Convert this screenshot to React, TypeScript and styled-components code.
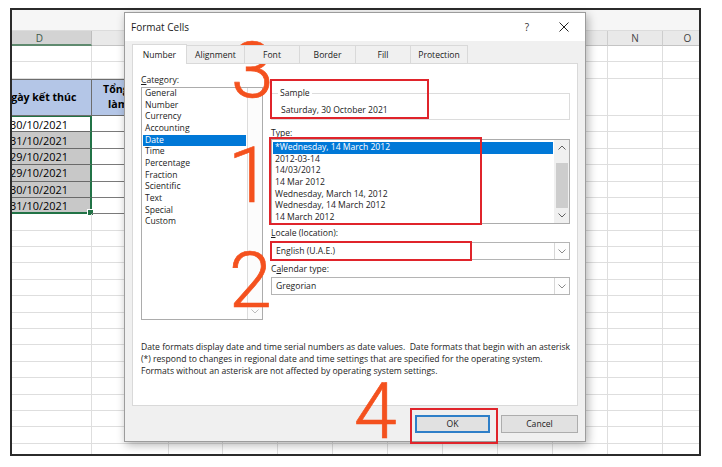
import React from "react";
import styled, { createGlobalStyle, css } from "styled-components";

const GlobalStyle = createGlobalStyle`
  html, body { margin: 0; padding: 0; background: #fff; }
  body { width: 722px; height: 467px; overflow: hidden; }
  #root { width: 722px; height: 467px; }
`;

const UI_FONT = 8.6;

const Page = styled.div`
  position: relative;
  width: 722px;
  height: 467px;
  box-sizing: border-box;
  padding: 8px 0 0 10px;
  background: #fff;
`;

const Frame = styled.div`
  width: 691px;
  height: 448px;
  box-sizing: border-box;
  border: 2px solid #2b2b2b;
  overflow: hidden;
  display: flex;
  flex-direction: column;
  background: #fff;
`;

const TopStrip = styled.div`
  height: 21px;
  flex: none;
  background: #f6f6f6;
  border-bottom: 1px solid #dcdcdc;
  box-sizing: border-box;
`;

const Sheet = styled.div`
  display: grid;
  grid-template-columns: 104px 77px 54px repeat(8, 55px) 50px;
  grid-template-rows: 15px 16.4px 16.4px 37.2px repeat(22, 16.4px);
  margin-left: -24px;
  font-family: "Open Sans", "Noto Sans", sans-serif;
  color: #000;
`;

type CellKind =
  | "colhead"
  | "colheadSel"
  | "blank"
  | "head"
  | "dataFirst"
  | "data"
  | "dataLast"
  | "dataE";

const Cell = styled.div<{ $kind: CellKind; $grey?: boolean }>`
  position: relative;
  box-sizing: border-box;
  display: flex;
  align-items: center;
  justify-content: center;
  text-align: center;
  white-space: nowrap;
  overflow: visible;
  font-size: 10.9px;
  border-right: 1px solid #dedede;
  border-bottom: 1px solid #dedede;
  ${(p) =>
    p.$kind === "colhead" &&
    css`
      background: #e9e9e9;
      color: #444;
      font-size: 10px;
      border-right: 1px solid #cdcdcd;
      border-bottom: 1px solid #c4c4c4;
    `}
  ${(p) =>
    p.$kind === "colheadSel" &&
    css`
      background: #d3d3d3;
      color: #3c5a48;
      font-size: 10px;
      border-right: 1px solid #bdbdbd;
      border-bottom: 2px solid #5f8a6f;
    `}
  ${(p) =>
    p.$kind === "head" &&
    css`
      background: #b4c6e7;
      font-weight: 700;
      font-size: 10.6px;
      white-space: normal;
      line-height: 15px;
      border-right: 1px solid #6d6d6d;
      border-bottom: 1px solid #6d6d6d;
      border-top: 1px solid #6d6d6d;
    `}
  ${(p) =>
    (p.$kind === "dataFirst" || p.$kind === "data" || p.$kind === "dataLast") &&
    css`
      background: ${p.$grey ? "#c8c8c8" : "#fff"};
      border-right: 2px solid #217346;
      border-bottom: 1px solid #6a6a6a;
    `}
  ${(p) =>
    p.$kind === "dataFirst" &&
    css`
      border-top: 1px solid #217346;
    `}
  ${(p) =>
    p.$kind === "dataLast" &&
    css`
      border-bottom: 2px solid #217346;
      &::after {
        content: "";
        position: absolute;
        right: -4px;
        bottom: -4px;
        width: 5px;
        height: 5px;
        background: #217346;
        border: 1px solid #fff;
      }
    `}
  ${(p) =>
    p.$kind === "dataE" &&
    css`
      border-right: 1px solid #7a7a7a;
      border-bottom: 1px solid #7a7a7a;
    `}
`;

const HeadText = styled.span`
  display: block;
  width: 100%;
  padding: 0 2px;
  box-sizing: border-box;
`;

/* ---------- dialog ---------- */

const Dialog = styled.div`
  position: absolute;
  left: 124px;
  top: 12px;
  width: 462px;
  height: 430px;
  box-sizing: border-box;
  background: #f0f0f0;
  border: 1px solid #9c9c9c;
  box-shadow: 2px 3px 9px rgba(0, 0, 0, 0.3);
  display: flex;
  flex-direction: column;
  font-family: "Open Sans", "Noto Sans", sans-serif;
  color: #1b1b1b;
`;

const TitleBar = styled.div`
  height: 28px;
  flex: none;
  background: #fff;
  display: flex;
  align-items: center;
  padding-left: 6px;
`;

const Title = styled.div`
  font-size: 10px;
  flex: 1;
  color: #1b1b1b;
`;

const TitleButton = styled.div<{ $w: number }>`
  width: ${(p) => p.$w}px;
  height: 28px;
  display: flex;
  align-items: center;
  justify-content: center;
  font-size: 10px;
  color: #333;
`;

const Body = styled.div`
  flex: 1;
  display: flex;
  flex-direction: column;
  padding: 3px 7px 0 7px;
`;

const TabStrip = styled.div`
  display: flex;
  height: 20px;
  position: relative;
  z-index: 1;
`;

const Tab = styled.div<{ $w: number; $active?: boolean }>`
  width: ${(p) => p.$w}px;
  height: ${(p) => (p.$active ? 20 : 19)}px;
  margin-top: ${(p) => (p.$active ? 0 : 1)}px;
  box-sizing: border-box;
  border: 1px solid #d9d9d9;
  border-left: ${(p) => (p.$active ? "1px solid #d9d9d9" : "none")};
  border-bottom: ${(p) => (p.$active ? "none" : "1px solid #d9d9d9")};
  background: ${(p) => (p.$active ? "#fff" : "#f0f0f0")};
  display: flex;
  align-items: center;
  justify-content: center;
  font-size: ${UI_FONT}px;
  color: #1b1b1b;
  &:first-child {
    border-left: 1px solid #d9d9d9;
  }
`;

const Panel = styled.div`
  margin-top: -1px;
  height: 343px;
  box-sizing: border-box;
  background: #fff;
  border: 1px solid #d9d9d9;
  padding: 10px 8px 0 8px;
  display: flex;
  flex-direction: column;
`;

const PanelTop = styled.div`
  display: grid;
  grid-template-columns: 122px 299px;
  column-gap: 8px;
`;

const Column = styled.div`
  display: flex;
  flex-direction: column;
`;

const Label = styled.div<{ $mt?: number }>`
  font-size: ${UI_FONT}px;
  line-height: 12px;
  height: 12px;
  margin-top: ${(p) => p.$mt ?? 0}px;
  white-space: nowrap;
  color: #1b1b1b;
  u {
    text-decoration: underline;
    text-underline-offset: 1px;
  }
`;

const ListBox = styled.div<{ $h: number; $mt?: number }>`
  height: ${(p) => p.$h}px;
  margin-top: ${(p) => p.$mt ?? 0}px;
  box-sizing: border-box;
  border: 1px solid #acacac;
  background: #fff;
  display: flex;
`;

const ListItems = styled.div<{ $pt: number }>`
  flex: 1;
  min-width: 0;
  padding: ${(p) => p.$pt}px 1px 0 1px;
`;

const ListItem = styled.div<{ $sel?: boolean }>`
  height: 11.67px;
  line-height: 11.67px;
  font-size: ${UI_FONT}px;
  padding-left: 2px;
  white-space: nowrap;
  background: ${(p) => (p.$sel ? "#0078d7" : "transparent")};
  color: ${(p) => (p.$sel ? "#fff" : "#1b1b1b")};
`;

const ScrollBar = styled.div<{ $disabled?: boolean }>`
  width: 14px;
  flex: none;
  display: flex;
  flex-direction: column;
  background: ${(p) => (p.$disabled ? "#fcfcfc" : "#f0f0f0")};
  border-left: 1px solid ${(p) => (p.$disabled ? "#dcdcdc" : "#f0f0f0")};
`;

const ScrollArrow = styled.div`
  height: 15px;
  flex: none;
  display: flex;
  align-items: center;
  justify-content: center;
`;

const ScrollTrack = styled.div`
  flex: 1;
  display: flex;
  flex-direction: column;
  padding: 8px 1px 0 1px;
`;

const ScrollThumb = styled.div`
  height: 45px;
  background: #cdcdcd;
`;

const SampleGroup = styled.fieldset`
  margin: 13px 0 0 0;
  height: 33px;
  box-sizing: border-box;
  border: 1px solid #dcdcdc;
  padding: 0 0 0 9px;
  min-width: 0;
`;

const Legend = styled.legend`
  font-size: ${UI_FONT}px;
  line-height: 12px;
  padding: 0 2px;
  margin-left: -3px;
  color: #1b1b1b;
`;

const SampleValue = styled.div`
  font-size: ${UI_FONT}px;
  line-height: 12px;
  margin-top: 5px;
  color: #1b1b1b;
`;

const Combo = styled.div<{ $mt?: number }>`
  height: 18px;
  margin-top: ${(p) => p.$mt ?? 0}px;
  box-sizing: border-box;
  border: 1px solid #b4b4b4;
  background: #fff;
  display: flex;
`;

const ComboText = styled.div`
  flex: 1;
  font-size: ${UI_FONT}px;
  line-height: 16px;
  padding-left: 4px;
  color: #1b1b1b;
`;

const ComboButton = styled.div`
  width: 14px;
  flex: none;
  border-left: 1px solid #d6d6d6;
  display: flex;
  align-items: center;
  justify-content: center;
  background: #fdfdfd;
`;

const Description = styled.div`
  margin-top: 21px;
  font-size: ${UI_FONT}px;
  line-height: 12px;
  white-space: pre;
  color: #1b1b1b;
`;

const ButtonRow = styled.div`
  display: flex;
  justify-content: flex-end;
  gap: 11px;
  margin-top: 9px;
`;

const Button = styled.div<{ $w: number; $default?: boolean }>`
  width: ${(p) => p.$w}px;
  height: 18px;
  box-sizing: border-box;
  background: #e1e1e1;
  border: ${(p) => (p.$default ? "2px solid #2f7fc8" : "1px solid #adadad")};
  display: flex;
  align-items: center;
  justify-content: center;
  font-size: ${UI_FONT}px;
  color: #1b1b1b;
`;

/* ---------- annotations ---------- */

const RedBox = styled.div<{ $x: number; $y: number; $w: number; $h: number }>`
  position: absolute;
  left: ${(p) => p.$x}px;
  top: ${(p) => p.$y}px;
  width: ${(p) => p.$w}px;
  height: ${(p) => p.$h}px;
  box-sizing: border-box;
  border: 2px solid #e0242b;
  pointer-events: none;
`;

const Marker = styled.span<{ $x: number; $y: number }>`
  position: absolute;
  left: ${(p) => p.$x}px;
  top: ${(p) => p.$y}px;
  font-family: Roboto, "Open Sans", sans-serif;
  font-weight: 300;
  font-size: 77px;
  line-height: 1;
  color: #f4511e;
  -webkit-text-stroke: 0.7px #f4511e;
`;

/* ---------- icons ---------- */

const ChevronUp = ({ color = "#606060" }: { color?: string }) => (
  <svg width="8" height="5" viewBox="0 0 8 5">
    <path d="M0.5 4.5 L4 1 L7.5 4.5" fill="none" stroke={color} strokeWidth="1" />
  </svg>
);

const ChevronDown = ({ color = "#606060" }: { color?: string }) => (
  <svg width="8" height="5" viewBox="0 0 8 5">
    <path d="M0.5 0.5 L4 4 L7.5 0.5" fill="none" stroke={color} strokeWidth="1" />
  </svg>
);

const CloseIcon = () => (
  <svg width="10" height="10" viewBox="0 0 10 10">
    <path d="M0.5 0.5 L9.5 9.5 M9.5 0.5 L0.5 9.5" fill="none" stroke="#222" strokeWidth="1" />
  </svg>
);

/* ---------- data ---------- */

const COLS = ["D", "E", "F", "G", "H", "I", "J", "K", "L", "M", "N", "O"];
const DATES = ["30/10/2021", "31/10/2021", "29/10/2021", "29/10/2021", "30/10/2021", "31/10/2021"];
const TOTAL_ROWS = 26;

const CATEGORIES = [
  "General",
  "Number",
  "Currency",
  "Accounting",
  "Date",
  "Time",
  "Percentage",
  "Fraction",
  "Scientific",
  "Text",
  "Special",
  "Custom",
];

const TYPES = [
  "*Wednesday, 14 March 2012",
  "2012-03-14",
  "14/03/2012",
  "14 Mar 2012",
  "Wednesday, March 14, 2012",
  "Wednesday, 14 March 2012",
  "14 March 2012",
];

const TABS: { label: string; w: number }[] = [
  { label: "Number", w: 55 },
  { label: "Alignment", w: 58 },
  { label: "Font", w: 55 },
  { label: "Border", w: 56 },
  { label: "Fill", w: 55 },
  { label: "Protection", w: 57 },
];

function renderSheet() {
  const cells: React.ReactNode[] = [];
  for (let r = 0; r < TOTAL_ROWS; r++) {
    COLS.forEach((col, c) => {
      const key = `${r}-${c}`;
      if (r === 0) {
        cells.push(
          <Cell key={key} $kind={c === 0 ? "colheadSel" : "colhead"}>
            {col}
          </Cell>
        );
      } else if (r === 3 && c === 0) {
        cells.push(
          <Cell key={key} $kind="head">
            <HeadText>Ngày kết thúc</HeadText>
          </Cell>
        );
      } else if (r === 3 && c === 1) {
        cells.push(
          <Cell key={key} $kind="head">
            <HeadText>Tổng ngày làm việc</HeadText>
          </Cell>
        );
      } else if (r >= 4 && r <= 9 && c === 0) {
        const i = r - 4;
        const kind: CellKind = i === 0 ? "dataFirst" : i === 5 ? "dataLast" : "data";
        cells.push(
          <Cell key={key} $kind={kind} $grey={i > 0}>
            {DATES[i]}
          </Cell>
        );
      } else if (r >= 4 && r <= 9 && c === 1) {
        cells.push(<Cell key={key} $kind="dataE" />);
      } else {
        cells.push(<Cell key={key} $kind="blank" />);
      }
    });
  }
  return cells;
}

export default function App() {
  return (
    <>
      <GlobalStyle />
      <Page>
        <Frame>
          <TopStrip />
          <Sheet>{renderSheet()}</Sheet>
        </Frame>

        <Dialog>
          <TitleBar>
            <Title>Format Cells</Title>
            <TitleButton $w={30}>?</TitleButton>
            <TitleButton $w={43}>
              <CloseIcon />
            </TitleButton>
          </TitleBar>
          <Body>
            <TabStrip>
              {TABS.map((t, i) => (
                <Tab key={t.label} $w={t.w} $active={i === 0}>
                  {t.label}
                </Tab>
              ))}
            </TabStrip>
            <Panel>
              <PanelTop>
                <Column>
                  <Label>
                    <u>C</u>ategory:
                  </Label>
                  <ListBox $h={233} $mt={1}>
                    <ListItems $pt={0}>
                      {CATEGORIES.map((c) => (
                        <ListItem key={c} $sel={c === "Date"}>
                          {c}
                        </ListItem>
                      ))}
                    </ListItems>
                    <ScrollBar $disabled>
                      <ScrollArrow>
                        <ChevronUp color="#d0d0d0" />
                      </ScrollArrow>
                      <ScrollTrack />
                      <ScrollArrow>
                        <ChevronDown color="#bdbdbd" />
                      </ScrollArrow>
                    </ScrollBar>
                  </ListBox>
                </Column>
                <Column>
                  <SampleGroup>
                    <Legend>Sample</Legend>
                    <SampleValue>Saturday, 30 October 2021</SampleValue>
                  </SampleGroup>
                  <Label $mt={7}>
                    <u>T</u>ype:
                  </Label>
                  <ListBox $h={85}>
                    <ListItems $pt={2}>
                      {TYPES.map((t, i) => (
                        <ListItem key={i} $sel={i === 0}>
                          {t}
                        </ListItem>
                      ))}
                    </ListItems>
                    <ScrollBar>
                      <ScrollArrow>
                        <ChevronUp />
                      </ScrollArrow>
                      <ScrollTrack>
                        <ScrollThumb />
                      </ScrollTrack>
                      <ScrollArrow>
                        <ChevronDown />
                      </ScrollArrow>
                    </ScrollBar>
                  </ListBox>
                  <Label $mt={3}>
                    <u>L</u>ocale (location):
                  </Label>
                  <Combo $mt={3}>
                    <ComboText>English (U.A.E.)</ComboText>
                    <ComboButton>
                      <ChevronDown color="#8a8a8a" />
                    </ComboButton>
                  </Combo>
                  <Label $mt={3}>
                    C<u>a</u>lendar type:
                  </Label>
                  <Combo $mt={2}>
                    <ComboText>Gregorian</ComboText>
                    <ComboButton>
                      <ChevronDown color="#8a8a8a" />
                    </ComboButton>
                  </Combo>
                </Column>
              </PanelTop>
              <Description>
                {"Date formats display date and time serial numbers as date values.  Date formats that begin with an asterisk\n(*) respond to changes in regional date and time settings that are specified for the operating system.\nFormats without an asterisk are not affected by operating system settings."}
              </Description>
            </Panel>
            <ButtonRow>
              <Button $w={75} $default>
                OK
              </Button>
              <Button $w={77}>Cancel</Button>
            </ButtonRow>
          </Body>
        </Dialog>

        <RedBox $x={270} $y={79} $w={159} $h={40} />
        <RedBox $x={269} $y={137} $w={213} $h={88} />
        <RedBox $x={270} $y={241} $w={202} $h={20} />
        <RedBox $x={410} $y={408} $w={88} $h={36} />

        <Marker $x={231} $y={33}>3</Marker>
        <Marker $x={228} $y={138}>1</Marker>
        <Marker $x={229} $y={243}>2</Marker>
        <Marker $x={354} $y={374}>4</Marker>
      </Page>
    </>
  );
}
